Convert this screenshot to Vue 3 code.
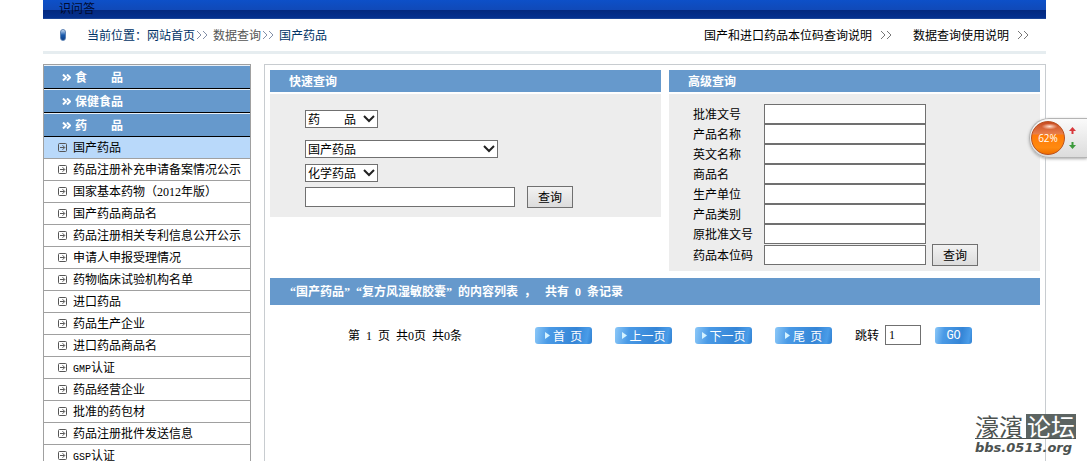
<script setup>
import { ref } from 'vue'

const categories = ['食\u3000\u3000品', '保健食品', '药\u3000\u3000品']

const items = [
  { cjk: '国产药品', active: true },
  { cjk: '药品注册补充申请备案情况公示' },
  { cjk: '国家基本药物（', digits: '2012', tail: '年版）' },
  { cjk: '国产药品商品名' },
  { cjk: '药品注册相关专利信息公开公示' },
  { cjk: '申请人申报受理情况' },
  { cjk: '药物临床试验机构名单' },
  { cjk: '进口药品' },
  { cjk: '药品生产企业' },
  { cjk: '进口药品商品名' },
  { latin: 'GMP', tail: '认证' },
  { cjk: '药品经营企业' },
  { cjk: '批准的药包材' },
  { cjk: '药品注册批件发送信息' },
  { latin: 'GSP', tail: '认证' }
]

const quickSelects = [
  { id: 'kind', label: '类别', value: '药\u3000\u3000品', size: 'short', gap: true },
  { id: 'dataset', label: '数据库', value: '国产药品', size: 'long' },
  { id: 'type', label: '药品类型', value: '化学药品', size: 'short' }
]

const fields = ['批准文号', '产品名称', '英文名称', '商品名', '生产单位', '产品类别', '原批准文号', '药品本位码']

const pagers = ['首\u00a0 页', '上一页', '下一页', '尾\u00a0 页']

const total = 0
const sp = '\u00a0\u00a0'
const jump = ref('1')
</script>

<template>
  <div class="page">
    <header class="banner"><a href="#">识问答</a></header>

    <nav class="crumbs">
      <span class="pill"></span>
      <span class="navy">当前位置：</span>
      <a href="#" class="navy">网站首页</a>
      <svg class="chev" viewBox="0 0 12 10"><path d="M1 1l4 4-4 4M7 1l4 4-4 4" /></svg>
      <a href="#" class="grey">数据查询</a>
      <svg class="chev" viewBox="0 0 12 10"><path d="M1 1l4 4-4 4M7 1l4 4-4 4" /></svg>
      <span class="navy">国产药品</span>
      <span class="help">
        <a href="#">国产和进口药品本位码查询说明
          <svg class="chev wide" viewBox="0 0 12 10"><path d="M1 1l4 4-4 4M7 1l4 4-4 4" /></svg></a>
        <a href="#">数据查询使用说明
          <svg class="chev wide" viewBox="0 0 12 10"><path d="M1 1l4 4-4 4M7 1l4 4-4 4" /></svg></a>
      </span>
    </nav>

    <div class="columns">
      <aside class="side">
        <a v-for="c in categories" :key="c" href="#" class="cat">
          <svg viewBox="0 0 9 7"><path d="M1 .5l3 3-3 3M5 .5l3 3-3 3" /></svg>{{ c }}
        </a>
        <a v-for="(i, n) in items" :key="n" href="#" class="item" :class="{ active: i.active }">
          <svg viewBox="0 0 9 9">
            <rect x=".5" y=".5" width="8" height="8" rx="1" />
            <path d="M2 4.500h4.500M4.500 2.200L6.800 4.500 4.500 6.800" />
          </svg>
          <span>{{ i.cjk }}<span v-if="i.digits" class="num">{{ i.digits }}</span><span v-if="i.latin" class="half">{{ i.latin }}</span>{{ i.tail }}</span>
        </a>
      </aside>

      <main class="main">
        <div class="panels">
          <section class="panel quick">
            <h2>快速查询</h2>
            <form class="body" @submit.prevent>
              <select
                v-for="s in quickSelects"
                :key="s.id"
                :aria-label="s.label"
                :class="[s.size, { gap: s.gap }]"
              >
                <option>{{ s.value }}</option>
              </select>
              <div class="line">
                <input type="text" aria-label="关键字" />
                <button class="btn">查询</button>
              </div>
            </form>
          </section>

          <section class="panel advanced">
            <h2>高级查询</h2>
            <form class="body" @submit.prevent>
              <div v-for="(f, n) in fields" :key="f" class="field">
                <label :for="'f' + n">{{ f }}</label>
                <input :id="'f' + n" type="text" />
                <button v-if="n === fields.length - 1" class="btn">查询</button>
              </div>
            </form>
          </section>
        </div>

        <h2 class="result"><span class="num">“</span>国产药品<span class="num">”{{ sp }}“</span>复方风湿敏胶囊<span class="num">”{{ sp }}</span>的内容列表<span class="num">{{ sp }}</span>，<span class="num">{{ sp }}&nbsp;</span>共有<span class="num">{{ sp }}{{ total }}{{ sp }}</span>条记录</h2>

        <form class="pager" @submit.prevent>
          <span class="count">第<span class="num">{{ sp }}1{{ sp }}</span>页<span class="num">{{ sp }}</span>共<span class="num">{{ total }}</span>页<span class="num">{{ sp }}</span>共<span class="num">{{ total }}</span>条</span>
          <button v-for="p in pagers" :key="p" class="pg">
            <svg viewBox="0 0 5 7"><path d="M0 0l5 3.500-5 3.500z" /></svg>{{ p }}
          </button>
          <label for="jump">跳转</label>
          <input id="jump" v-model="jump" type="text" />
          <button class="pg go">GO</button>
        </form>
      </main>
    </div>

    <div class="meter">
      <div class="ball">62%</div>
      <svg viewBox="0 0 7 23">
        <path fill="#d8383c" d="M3.500 0L7 4H4.500v3h-2V4H0z" />
        <path fill="#3c9a3c" d="M3.500 22L7 18H4.500v-3h-2v3H0z" />
      </svg>
    </div>

    <div class="mark">
      <div class="name"><span>濠濱</span><span class="box">论坛</span></div>
      <div class="site">bbs.0513.org</div>
    </div>
  </div>
</template>

<style>
body {
  overflow: hidden;
  background: #fff;
}
</style>

<style scoped>
.page {
  position: relative;
  display: flex;
  flex-direction: column;
  box-sizing: border-box;
  height: 100vh;
  padding: 0 41px 0 43px;
  overflow: hidden;
  color: #000;
  font: 12px/18px "Noto Sans CJK SC", sans-serif;
}
.page * {
  box-sizing: border-box;
}
a {
  color: inherit;
  text-decoration: none;
}
input,
select,
button {
  margin: 0;
  font: inherit;
  color: #000;
  border-radius: 0;
}
input {
  height: 20px;
  padding: 0 3px;
  border: 1px solid #707070;
  background: #fff;
}
svg {
  flex: none;
}
.half {
  font-family: "Liberation Mono", monospace;
  font-size: 10px;
  line-height: 0;
}
.num {
  font-family: "Liberation Serif", serif;
  line-height: 0;
}

.banner {
  flex: none;
  height: 19px;
  padding-left: 16px;
  background: linear-gradient(#0d50c8 0, #1049b8 10px, #03297f 10px, #04318f 18px, #1c4698 18px);
  color: #000b30;
  line-height: 15px;
}

.crumbs {
  display: flex;
  flex: none;
  align-items: center;
  height: 35px;
  padding: 0 17px;
  border-bottom: 3px solid #e6edf0;
}
.pill {
  width: 6px;
  height: 12px;
  margin-right: 21px;
  border: 1px solid #5c82b4;
  border-radius: 3px;
  background: linear-gradient(#c4daf2, #1c5cae 50%, #0c3f88);
}
.navy {
  color: #003366;
}
.grey {
  color: #555;
}
.chev {
  width: 12px;
  height: 10px;
  margin: 0 5px 0 1px;
  fill: none;
  stroke: #8490a8;
}
.help {
  display: flex;
  gap: 21px;
  margin-left: auto;
}
.help a {
  display: flex;
  align-items: center;
}
.chev.wide {
  margin: 0 0 0 8px;
  stroke: #777;
}

.columns {
  display: flex;
  flex: 1;
  align-items: flex-start;
  gap: 13px;
  padding-top: 10px;
}
.side {
  flex: none;
  width: 208px;
  border: 1px solid #a0a0a0;
}
.cat {
  display: flex;
  align-items: center;
  gap: 4px;
  height: 24px;
  padding-left: 18px;
  border-top: 1px solid #e8f0f8;
  border-bottom: 1px solid #000;
  background: #6699cc;
  color: #fff;
  font-weight: bold;
}
.cat svg {
  width: 9px;
  height: 7px;
  fill: none;
  stroke: #fff;
  stroke-width: 2;
}
.item {
  display: flex;
  align-items: center;
  gap: 6px;
  height: 22px;
  padding: 0 0 1px 14px;
  border-bottom: 1px solid #a0a0a0;
}
.item.active {
  background: #b9d9fa;
}
.item svg {
  width: 9px;
  height: 9px;
  fill: none;
  stroke: #555;
}

.main {
  flex: 1;
  align-self: stretch;
  padding: 5px;
  border: 1px solid #c8ccd0;
  border-bottom: 0;
}
.panels {
  display: flex;
  align-items: flex-start;
  gap: 8px;
}
.quick {
  flex: 391;
}
.advanced {
  flex: 371;
}
h2 {
  margin: 0;
  background: #6699cc;
  color: #fff;
  font-size: 12px;
  font-weight: bold;
}
.panel h2 {
  height: 22px;
  margin-bottom: 2px;
  padding-left: 19px;
  line-height: 22px;
}
.body {
  background: #ededed;
}
.quick .body {
  display: flex;
  flex-direction: column;
  align-items: flex-start;
  padding: 16px 0 9px 35px;
}
select {
  height: 18px;
  margin-bottom: 6px;
  padding: 0 2px;
  border: 1px solid #707070;
  appearance: none;
  background: #fff url("data:image/svg+xml,%3Csvg xmlns='http://www.w3.org/2000/svg' width='12' height='8'%3E%3Cpath d='M1 1l5 5 5-5' fill='none' stroke='%23222' stroke-width='2'/%3E%3C/svg%3E") no-repeat right 2px center;
  line-height: 16px;
}
.short {
  width: 73px;
}
.long {
  width: 193px;
}
.gap {
  margin-bottom: 12px;
}
.line {
  display: flex;
  align-items: center;
  gap: 12px;
  margin-top: -2px;
}
.line input {
  width: 210px;
}
.btn {
  width: 46px;
  height: 22px;
  padding: 0;
  border: 1px solid #707070;
  background: linear-gradient(#f2f2f2, #dcdcdc);
  line-height: 18px;
}
.advanced .body {
  padding: 10px 0 5px 24px;
}
.field {
  display: flex;
  align-items: center;
}
.field label {
  width: 71px;
}
.field input {
  width: 162px;
}
.field .btn {
  margin-left: 6px;
}

.result {
  height: 27px;
  margin-top: 7px;
  padding-left: 20px;
  line-height: 26px;
}
.pager {
  display: flex;
  align-items: center;
  padding: 20px 0 0 78px;
}
.count {
  margin-right: 73px;
}
.pg {
  display: flex;
  align-items: center;
  justify-content: center;
  gap: 3px;
  width: 57px;
  height: 17px;
  margin-right: 23px;
  padding: 0;
  border: 0;
  border-radius: 3px;
  background: linear-gradient(100deg, #8cc8f8 0, #4a9ae6 25%, #3585d6 70%, #4a9ce8 90%, #2f7fd0);
  color: #fff;
  line-height: 17px;
  white-space: nowrap;
}
.pg svg {
  width: 5px;
  height: 7px;
  fill: #d4f2ff;
}
.pager input {
  width: 36px;
  margin: 0 14px 0 6px;
  font-family: "Liberation Serif", serif;
}
.pg.go {
  width: 37px;
  margin: 0;
  padding-top: 2px;
  font-family: "Liberation Mono", monospace;
}

.meter {
  position: absolute;
  top: 118px;
  right: 0;
  display: flex;
  align-items: center;
  gap: 4px;
  width: 58px;
  height: 40px;
  padding-left: 1px;
  border: 1px solid #b4b4b4;
  border-right: 0;
  border-radius: 20px 0 0 20px;
  background: linear-gradient(#fafafa, #dcdcdc);
  box-shadow: 0 1px 3px #aaa;
}
.ball {
  width: 34px;
  height: 34px;
  border: 1px solid #b85020;
  border-radius: 50%;
  background:
    radial-gradient(ellipse 8px 3px at 55% 14%, #ffe0d0, transparent),
    linear-gradient(#c84a20 0, #e8804c 38%, #ff7a08 40%, #ff8a10 80%, #f07000);
  color: #fff;
  font: 10px/32px "Open Sans", sans-serif;
  text-align: center;
}
.meter svg {
  width: 7px;
  height: 23px;
}

.mark {
  position: absolute;
  right: 11px;
  bottom: 4px;
  color: #4c5250;
}
.name {
  display: flex;
  gap: 3px;
  border-bottom: 1px solid #4c5250;
  font-size: 24px;
  line-height: 24px;
}
.box {
  padding: 0 1px;
  background: #5c6462;
  color: #fff;
}
.site {
  font: italic bold 13px/18px "DejaVu Sans", sans-serif;
}
</style>
